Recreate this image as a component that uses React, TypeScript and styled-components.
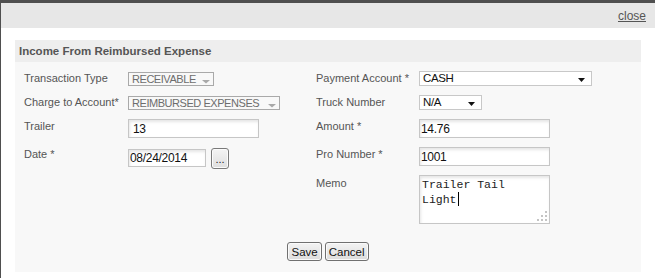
import React from "react";
import styled, { createGlobalStyle } from "styled-components";

const GlobalStyle = createGlobalStyle`
  html, body {
    margin: 0;
    padding: 0;
    background: #ffffff;
    font-family: "Liberation Sans", Arial, sans-serif;
  }
`;

function SelectArrow({ disabled }: { disabled?: boolean }) {
  if (disabled) {
    return (
      <ArrowIcon width="8" height="4" viewBox="0 0 8 4" $right={3} $bottom={1}>
        <polygon points="0,0 8,0 4,3.5" fill="#a8a8a8" />
      </ArrowIcon>
    );
  }
  return (
    <ArrowIcon width="7" height="4" viewBox="0 0 7 4" $right={6} $bottom={3}>
      <polygon points="0,0 7,0 3.5,4" fill="#111111" />
    </ArrowIcon>
  );
}

function ResizeGrip() {
  const dots = [
    [8, 0],
    [4, 4],
    [8, 4],
    [0, 8],
    [4, 8],
    [8, 8],
  ];
  return (
    <GripIcon width="10" height="10" viewBox="0 0 10 10">
      {dots.map(([x, y]) => (
        <rect key={`${x}-${y}`} x={x} y={y} width="2" height="2" fill="#c4c4c4" />
      ))}
    </GripIcon>
  );
}

function App() {
  return (
    <Frame>
      <GlobalStyle />
      <TopBar>
        <CloseLink href="#">close</CloseLink>
      </TopBar>
      <Panel>
        <PanelTitle>Income From Reimbursed Expense</PanelTitle>
        <PanelBody>
          <FormGrid>
            <Label>Transaction Type</Label>
            <Field>
              <SelectBox $width={86} $disabled>
                RECEIVABLE
                <SelectArrow disabled />
              </SelectBox>
            </Field>
            <Label>Payment Account *</Label>
            <Field>
              <SelectBox $width={173}>
                CASH
                <SelectArrow />
              </SelectBox>
            </Field>

            <Label>Charge to Account*</Label>
            <Field>
              <SelectBox $width={152} $disabled>
                REIMBURSED EXPENSES
                <SelectArrow disabled />
              </SelectBox>
            </Field>
            <Label>Truck Number</Label>
            <Field>
              <SelectBox $width={63}>
                N/A
                <SelectArrow />
              </SelectBox>
            </Field>

            <Label>Trailer</Label>
            <Field>
              <TextInput $width={131} $pad={4} value="13" readOnly />
            </Field>
            <Label>Amount *</Label>
            <Field>
              <TextInput $width={131} $pad={1} value="14.76" readOnly />
            </Field>

            <Label>Date *</Label>
            <DateField>
              <TextInput $width={78} $height={18} $pad={1} value="08/24/2014" readOnly />
              <DotsButton type="button">...</DotsButton>
            </DateField>
            <Label>Pro Number *</Label>
            <Field>
              <TextInput $width={131} $pad={1} value="1001" readOnly />
            </Field>

            <MemoLabel>Memo</MemoLabel>
            <Field>
              <MemoBox>
                Trailer Tail
                <br />
                Light
                <Caret />
                <ResizeGrip />
              </MemoBox>
            </Field>
          </FormGrid>
          <ButtonRow>
            <FormButton type="button">Save</FormButton>
            <FormButton type="button">Cancel</FormButton>
          </ButtonRow>
        </PanelBody>
      </Panel>
    </Frame>
  );
}

const Frame = styled.div`
  box-sizing: border-box;
  width: 655px;
  height: 278px;
  border-top: 3px solid #4f4f4f;
  border-left: 1px solid #4f4f4f;
  background: #ffffff;
  overflow: hidden;
`;

const TopBar = styled.div`
  display: flex;
  justify-content: flex-end;
  align-items: center;
  height: 25px;
  padding-right: 9px;
  background: #e7e7e7;
`;

const CloseLink = styled.a`
  font-size: 12px;
  color: #555555;
  text-decoration: underline;
  line-height: 14px;
  margin-top: 1px;
`;

const Panel = styled.div`
  margin: 12px 14px 0 14px;
`;

const PanelTitle = styled.div`
  height: 22px;
  line-height: 23px;
  padding-left: 4px;
  background: #eeeeee;
  color: #555555;
  font-size: 11.5px;
  font-weight: bold;
`;

const PanelBody = styled.div`
  padding: 9px 9px 11px 9px;
  background: #f8f8f8;
`;

const FormGrid = styled.div`
  display: grid;
  grid-template-columns: 104px 188px 103px 1fr;
  grid-template-rows: 15px 15px 19px 19px 49px;
  row-gap: 9px;
  align-items: start;
`;

const Label = styled.div`
  font-size: 11px;
  line-height: 14px;
  color: #555555;
  white-space: nowrap;
`;

const MemoLabel = styled(Label)`
  grid-column: 3;
  padding-top: 1px;
`;

const Field = styled.div`
  display: flex;
  align-items: flex-start;
`;

const DateField = styled(Field)`
  gap: 5px;
  margin-top: 2px;
`;

const SelectBox = styled.div<{ $width: number; $disabled?: boolean }>`
  position: relative;
  box-sizing: border-box;
  width: ${(p) => p.$width}px;
  height: ${(p) => (p.$disabled ? 14 : 15)}px;
  margin-top: ${(p) => (p.$disabled ? 1 : 0)}px;
  padding-left: 3px;
  border: 1px solid ${(p) => (p.$disabled ? "#a9a9a9" : "#c8c8c8")};
  background: ${(p) => (p.$disabled ? "#f8f8f8" : "#ffffff")};
  color: ${(p) => (p.$disabled ? "#6d6d6d" : "#111111")};
  font-size: ${(p) => (p.$disabled ? 11 : 11.5)}px;
  letter-spacing: ${(p) => (p.$disabled ? -0.45 : -0.35)}px;
  line-height: 12px;
  white-space: nowrap;
`;

const ArrowIcon = styled.svg<{ $right: number; $bottom: number }>`
  position: absolute;
  right: ${(p) => p.$right}px;
  bottom: ${(p) => p.$bottom}px;
`;

const TextInput = styled.input<{ $width: number; $height?: number; $pad: number }>`
  box-sizing: border-box;
  width: ${(p) => p.$width}px;
  height: ${(p) => p.$height ?? 19}px;
  margin: 0;
  padding: 0 0 0 ${(p) => p.$pad}px;
  border: 1px solid #c6c6c6;
  background: #ffffff;
  box-shadow: inset 1px 2px 3px rgba(0, 0, 0, 0.1);
  font-family: "Liberation Sans", Arial, sans-serif;
  font-size: 12px;
  letter-spacing: -0.3px;
  color: #111111;
  outline: none;
`;

const DotsButton = styled.button`
  box-sizing: border-box;
  width: 18px;
  height: 21px;
  margin: -1px 0 0 0;
  padding: 0 0 4px 0;
  border: 1px solid #7a7a7a;
  border-radius: 3px;
  background: linear-gradient(#f4f4f4, #dedede);
  box-shadow: inset 0 0 0 1px #fbfbfb;
  font-family: "Liberation Sans", Arial, sans-serif;
  font-size: 11px;
  color: #222222;
  line-height: 21px;
`;

const MemoBox = styled.div`
  position: relative;
  box-sizing: border-box;
  width: 131px;
  height: 49px;
  padding: 3px 0 0 2px;
  border: 1px solid #c6c6c6;
  background: #ffffff;
  box-shadow: inset 1px 2px 3px rgba(0, 0, 0, 0.1);
  font-family: "Liberation Mono", "Courier New", monospace;
  font-size: 11.5px;
  line-height: 12.5px;
  color: #222222;
`;

const Caret = styled.span`
  display: inline-block;
  width: 1px;
  height: 14px;
  margin-left: 1px;
  vertical-align: -3px;
  background: #000000;
`;

const GripIcon = styled.svg`
  position: absolute;
  right: 2px;
  bottom: 2px;
`;

const ButtonRow = styled.div`
  display: flex;
  justify-content: center;
  gap: 3px;
  margin-top: 18px;
`;

const FormButton = styled.button`
  box-sizing: border-box;
  height: 19px;
  margin: 0;
  padding: 0 3px;
  border: 1px solid #707070;
  border-radius: 3px;
  background: linear-gradient(#f3f3f3, #dcdcdc);
  box-shadow: inset 0 0 0 1px #fafafa;
  font-family: "Liberation Sans", Arial, sans-serif;
  font-size: 11.5px;
  color: #111111;
  line-height: 16px;
`;

export default App;
